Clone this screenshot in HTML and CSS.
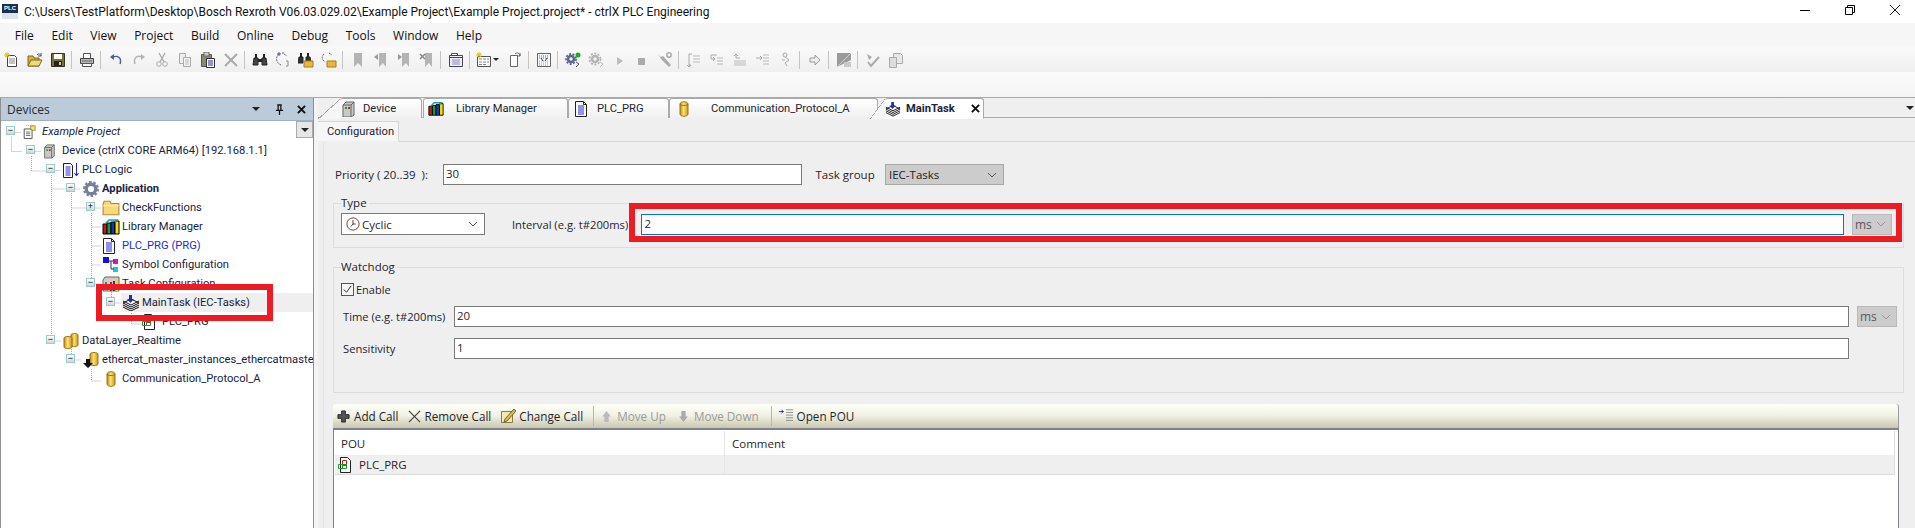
FILE: index.html
```html
<!DOCTYPE html>
<html lang="en">
<head>
<meta charset="utf-8">
<title>ctrlX PLC Engineering</title>
<link rel="stylesheet" href="styles.css">
</head>
<body>
<svg class="defs" width="0" height="0" aria-hidden="true">
  <defs>
    <linearGradient id="gold" x1="0" x2="1" y1="0" y2="0"><stop offset="0" stop-color="#b98a10"/><stop offset=".45" stop-color="#ffe27a"/><stop offset="1" stop-color="#c9961a"/></linearGradient>
    <symbol id="i-proj" viewBox="0 0 16 16"><path d="M5 .5h8v3" fill="none" stroke="#999" stroke-dasharray="1 1"/><rect x="10" y="1" width="5" height="5" fill="#f4e26a" stroke="#a09030"/><path d="M2.500 4.500h7l2 2v9h-9z" fill="#fff" stroke="#444"/><path d="M4.500 8h5M4.500 10h5M4.500 12h5" stroke="#666"/></symbol>
    <symbol id="i-device" viewBox="0 0 16 16"><path d="M3 4l3-3h8v13l-3 2H3z" fill="#c8c8c8" stroke="#666"/><path d="M3 4h8v12M11 4l3-3" fill="none" stroke="#666"/><rect x="5" y="6" width="2" height="2" fill="#1aa51a"/><rect x="8" y="6" width="2" height="2" fill="#d02020"/></symbol>
    <symbol id="i-lib" viewBox="0 0 18 16"><path d="M1 5h4v10H1z" fill="#c81818" stroke="#000"/><path d="M5 4h4v11H5z" fill="#179a3a" stroke="#000"/><path d="M9 3h4v12H9z" fill="#1f2fc0" stroke="#000"/><path d="M13 2h4v13h-4z" fill="#f4e000" stroke="#000"/><path d="M3 5l4-4h8l-2 2" fill="none" stroke="#14a0b0" stroke-width="1.500"/></symbol>
    <symbol id="i-prg" viewBox="0 0 14 16"><path d="M1.500.5h8l3 3v12h-11z" fill="#fff" stroke="#222"/><path d="M9.500.5v3h3" fill="none" stroke="#222"/><path d="M4 5h6M4 7h6M4 9h6M4 11h6M4 13h6" stroke="#2222d8"/></symbol>
    <symbol id="i-logic" viewBox="0 0 18 16"><path d="M1.500 1.500h7l2 2v12h-9z" fill="#fff" stroke="#222"/><path d="M3.500 5h5M3.500 7h5M3.500 9h5M3.500 11h5M3.500 13h5" stroke="#2222d8"/><path d="M14.500 1v12M12.500 11l2 3 2-3" fill="none" stroke="#2222d8"/></symbol>
    <symbol id="i-cyl" viewBox="0 0 10 16"><path d="M1 3c0-3 8-3 8 0v10c0 3-8 3-8 0z" fill="url(#gold)" stroke="#9a7410"/><path d="M1 3c0 2 8 2 8 0" fill="none" stroke="#9a7410"/></symbol>
    <symbol id="i-cyl2" viewBox="0 0 16 16"><path d="M8 2c0-2 7-2 7 0v10c0 2-7 2-7 0z" fill="url(#gold)" stroke="#9a7410"/><path d="M1 5c0-2 8-2 8 0v9c0 2-8 2-8 0z" fill="url(#gold)" stroke="#9a7410"/></symbol>
    <symbol id="i-eth" viewBox="0 0 16 16"><path d="M7 2c0-2 8-2 8 0v10c0 2-8 2-8 0z" fill="url(#gold)" stroke="#9a7410"/><path d="M3 7h4v4h3l-5 5-5-5h3z" fill="#111"/></symbol>
    <symbol id="i-task" viewBox="0 0 18 16"><path d="M9 4l8 4-8 4-8-4z" fill="#fff" stroke="#111"/><path d="M1 10l8 4 8-4M1 12l8 4 8-4" fill="none" stroke="#111"/><path d="M1 6l8 4 8-4" fill="none" stroke="#111"/><path d="M7 0h3v4h2l-3.500 4L5 4h2z" fill="#1e2fb0"/></symbol>
    <symbol id="i-gear" viewBox="0 0 16 16"><circle cx="8" cy="8" r="4.800" fill="none" stroke="#75819a" stroke-width="3.400"/><circle cx="8" cy="8" r="7" fill="none" stroke="#75819a" stroke-width="2" stroke-dasharray="2.500 1.900"/></symbol>
    <symbol id="i-folder" viewBox="0 0 16 14"><path d="M1 3l1-2h5l1 2h7v10H1z" fill="#f8d878" stroke="#a88c40"/><path d="M1 5h14" stroke="#fff3c0"/></symbol>
    <symbol id="i-sym" viewBox="0 0 16 16"><rect x="0" y="0" width="6" height="6" fill="#1010e0"/><rect x="10" y="2" width="5" height="5" fill="#e010d0"/><rect x="10" y="10" width="5" height="5" fill="#10d0e0"/><path d="M6 4h6M8 4v8h3" fill="none" stroke="#333"/></symbol>
    <symbol id="i-cfg" viewBox="0 0 18 16"><path d="M1 4l2-3h14v14H1z" fill="#ccc" stroke="#666"/><path d="M8 6h2v9H8z" fill="#c81818"/><path d="M11 5h2v10h-2z" fill="#1f2fc0"/><path d="M14 4h2v11h-2z" fill="#f4e000"/><rect x="3" y="6" width="2" height="2" fill="#1aa51a"/></symbol>
    <symbol id="i-pou" viewBox="0 0 14 16"><path d="M2.500.5h7l3 3v12h-10z" fill="#fff" stroke="#222"/><path d="M4.500 3.500h4v5h-4z" fill="none" stroke="#c81818"/><path d="M.5 7.500h4v4h-4zM4.500 7.500h4v4h-4z" fill="none" stroke="#1a9a30"/></symbol>
    <symbol id="i-new" viewBox="0 0 16 16"><path d="M3.500 3.500h7l2 2v9h-9z" fill="#fff" stroke="#444"/><path d="M5 7h6M5 9h6M5 11h6" stroke="#888"/><path d="M3 0v6M0 3h6M1 1l4 4M5 1L1 5" stroke="#e8c000"/></symbol>
    <symbol id="i-open" viewBox="0 0 16 16"><path d="M1 4h5l1 2h5v8H1z" fill="#d8b040" stroke="#806820"/><path d="M1 14l3-6h11l-3 6z" fill="#f0d878" stroke="#806820"/><path d="M10 3c2-2 3-1 4 1M14 1v3h-3" fill="none" stroke="#456"/></symbol>
    <symbol id="i-save" viewBox="0 0 16 16"><path d="M1.500 1.500h13v13h-13z" fill="#7a7030" stroke="#332"/><rect x="4" y="2" width="8" height="5" fill="#fff"/><rect x="4" y="9" width="8" height="5" fill="#222"/><rect x="9" y="10" width="2" height="3" fill="#ccc"/></symbol>
    <symbol id="i-print" viewBox="0 0 16 16"><path d="M4.500 1.500h7v5h-7z" fill="#fff" stroke="#555"/><path d="M1.500 6.500h13v5h-13z" fill="#b8b8b8" stroke="#444"/><path d="M3.500 11.500h9v3h-9z" fill="#fff" stroke="#555"/><path d="M3 9h10" stroke="#666"/></symbol>
    <symbol id="i-undo" viewBox="0 0 16 16"><path d="M5 5c5-2 9 1 7 7" fill="none" stroke="#4a5ab0" stroke-width="1.400"/><path d="M2 5l4-3v6z" fill="#4a5ab0"/></symbol>
    <symbol id="i-redo" viewBox="0 0 16 16"><path d="M11 5C6 3 2 6 4 12" fill="none" stroke="#b4b4b4" stroke-width="1.500"/><path d="M14 5l-4-3v6z" fill="#b4b4b4"/></symbol>
    <symbol id="i-cut" viewBox="0 0 16 16"><path d="M5 1l5 9M11 1L6 10" stroke="#aaa" stroke-width="1.300"/><circle cx="5" cy="12" r="2.300" fill="none" stroke="#aaa"/><circle cx="11" cy="12" r="2.300" fill="none" stroke="#aaa"/></symbol>
    <symbol id="i-copy" viewBox="0 0 16 16"><path d="M2.500 1.500h6v10h-6z" fill="#eee" stroke="#aaa"/><path d="M6.500 5.500h7v9h-7z" fill="#f4f4f4" stroke="#aaa"/><path d="M8 8h4M8 10h4M8 12h4" stroke="#bbb"/></symbol>
    <symbol id="i-paste" viewBox="0 0 16 16"><path d="M1.500 2.500h10v12h-10z" fill="#8a8a70" stroke="#555"/><rect x="4" y="0" width="5" height="4" fill="#ccc" stroke="#666"/><path d="M6.500 6.500h8v9h-8z" fill="#fff" stroke="#333"/><path d="M8 9h5M8 11h5M8 13h5" stroke="#2222a8"/></symbol>
    <symbol id="i-del" viewBox="0 0 16 16"><path d="M2 2l12 12M14 2L2 14" stroke="#aaa" stroke-width="2"/></symbol>
    <symbol id="i-find" viewBox="0 0 16 16"><path d="M2 6h4v7H1zM10 6h4l1 7h-5z" fill="#444" stroke="#222"/><path d="M3 2h2v4H3zM11 2h2v4h-2zM6 7h4v3H6z" fill="#222"/></symbol>
    <symbol id="i-next" viewBox="0 0 16 16"><path d="M4 2c-4 3-3 9 2 11M9 2l3 2M7 1h2" fill="none" stroke="#667" stroke-dasharray="2 1"/><path d="M4 0v4M2 2h4" stroke="#557"/><path d="M11 9h2v5h-2" fill="none" stroke="#889"/></symbol>
    <symbol id="i-findf" viewBox="0 0 16 16"><path d="M1 5h4v6H0zM8 5h4l1 6H8z" fill="#333" stroke="#222"/><path d="M2 1h2v4H2zM9 1h2v4H9z" fill="#222"/><path d="M6 9h9v6H6z" fill="#e8b838" stroke="#a08020"/></symbol>
    <symbol id="i-nextf" viewBox="0 0 16 16"><path d="M3 2c-3 3-2 6 1 8M8 1l3 2" fill="none" stroke="#667" stroke-dasharray="2 1"/><path d="M6 9h9v6H6z" fill="#e8b838" stroke="#a08020"/></symbol>
    <symbol id="i-mark" viewBox="0 0 16 16"><path d="M4 1h8v14l-4-4-4 4z" fill="#b4b4b4"/></symbol>
    <symbol id="i-markl" viewBox="0 0 16 16"><path d="M6 1h7v14l-3-4-4 4z" fill="#b4b4b4"/><path d="M1 5l4-3v6z" fill="#999"/></symbol>
    <symbol id="i-markr" viewBox="0 0 16 16"><path d="M6 1h7v14l-3-4-4 4z" fill="#b4b4b4"/><path d="M6 5L2 2v6z" fill="#999"/></symbol>
    <symbol id="i-markx" viewBox="0 0 16 16"><path d="M6 1h7v14l-3-4-4 4z" fill="#b4b4b4"/><path d="M1 2l5 5M6 2L1 7" stroke="#888" stroke-width="1.500"/></symbol>
    <symbol id="i-win" viewBox="0 0 16 16"><path d="M3.500 1.500h6v4h-6z" fill="#fff" stroke="#555"/><path d="M1.500 3.500h13v11h-13z" fill="#eef" stroke="#445"/><path d="M1.500 5.500h13" stroke="#445"/><path d="M4 8h8M4 10h8M4 12h8" stroke="#88a"/></symbol>
    <symbol id="i-grid" viewBox="0 0 16 16"><path d="M1.500 4.500h13v10h-13z" fill="#fff" stroke="#555"/><path d="M3 7h3M7 7h3M11 7h2M3 10h3M7 10h3M11 10h2M3 12.500h3M7 12.500h3" stroke="#8a8a8a"/><path d="M3 0v6M0 3h6M1 1l4 4M5 1L1 5" stroke="#e8c000"/></symbol>
    <symbol id="i-doc" viewBox="0 0 16 16"><path d="M3.500 3.500h7v11h-7z" fill="#fff" stroke="#666"/><path d="M8 2c2-2 5-1 5 2M13 1v3h-3" fill="none" stroke="#666"/></symbol>
    <symbol id="i-bld" viewBox="0 0 16 16"><path d="M1.500 1.500h13v13h-13z" fill="#fff" stroke="#666"/><path d="M3 4h10M3 6h10" stroke="#4858b8" stroke-dasharray="1 1"/><path d="M3 9h10M3 11h10M3 13h10" stroke="#999" stroke-dasharray="1 1"/><path d="M5 6l2 3M11 6L9 9" stroke="#2e3fa0"/></symbol>
    <symbol id="i-login" viewBox="0 0 16 16"><circle cx="6" cy="7" r="3" fill="none" stroke="#5a6890" stroke-width="2.500"/><circle cx="6" cy="7" r="5" fill="none" stroke="#5a6890" stroke-width="1.800" stroke-dasharray="2 1.500"/><circle cx="13" cy="3" r="2.500" fill="#18b018"/><path d="M11 10l3 2-3 3" fill="none" stroke="#555"/></symbol>
    <symbol id="i-logout" viewBox="0 0 16 16"><circle cx="7" cy="7" r="3" fill="none" stroke="#b4b4b4" stroke-width="2.500"/><circle cx="7" cy="7" r="5.500" fill="none" stroke="#b4b4b4" stroke-width="1.800" stroke-dasharray="2 1.500"/><path d="M12 10l3 2-3 3" fill="none" stroke="#bbb"/></symbol>
    <symbol id="i-play" viewBox="0 0 16 16"><path d="M6 5l6 4-6 4z" fill="#bbb"/></symbol>
    <symbol id="i-stop" viewBox="0 0 16 16"><rect x="4" y="6" width="7" height="7" fill="#aaa"/></symbol>
    <symbol id="i-wrench" viewBox="0 0 16 16"><path d="M1 3l3 2 2-1 8 9-2 2-8-8-1-2-2-2z" fill="#aaa"/><circle cx="12" cy="3" r="2.200" fill="none" stroke="#aaa" stroke-width="1.500"/></symbol>
    <symbol id="i-s1" viewBox="0 0 16 16"><path d="M6 2H3v11h2M3 13v2M1 13l2 2 2-2" fill="none" stroke="#aaa"/><path d="M7 4h7M7 7h7M7 10h7" stroke="#bbb"/></symbol>
    <symbol id="i-s2" viewBox="0 0 16 16"><path d="M2 3h6M2 3v4h4M4 9L6 7 4 5" fill="none" stroke="#aaa"/><path d="M8 6h6M8 9h6M8 12h6" stroke="#bbb"/></symbol>
    <symbol id="i-s3" viewBox="0 0 16 16"><path d="M4 6V2M2 4l2-2 2 2M4 6h4" fill="none" stroke="#aaa"/><path d="M2 9h12M2 11h12M2 13h12" stroke="#bbb"/></symbol>
    <symbol id="i-s4" viewBox="0 0 16 16"><path d="M1 6h6M5 4l2 2-2 2" fill="none" stroke="#aaa"/><path d="M8 3h6M8 6h6M8 9h6M8 12h6" stroke="#bbb"/></symbol>
    <symbol id="i-s5" viewBox="0 0 16 16"><circle cx="7" cy="3" r="2" fill="none" stroke="#aaa"/><path d="M7 5l4 3-4 3M7 11l2 3" fill="none" stroke="#aaa"/><path d="M4 8h3" stroke="#aaa"/></symbol>
    <symbol id="i-arr" viewBox="0 0 16 16"><path d="M3 6h5V3l5 5-5 5v-3H3z" fill="#eee" stroke="#999"/></symbol>
    <symbol id="i-flag" viewBox="0 0 16 16"><path d="M1 1h14v7L1 15z" fill="#9a9a9a"/><path d="M1 15L15 1" stroke="#ccc"/><path d="M8 10h7v5H8z" fill="#c8c8c8"/></symbol>
    <symbol id="i-chk" viewBox="0 0 16 16"><path d="M2 2l5 3-3 3z" fill="#aaa"/><path d="M3 10l3 4 8-9" fill="none" stroke="#aaa" stroke-width="2"/></symbol>
    <symbol id="i-dup" viewBox="0 0 16 16"><path d="M5.500 1.500h7l2 2v8h-9z" fill="#e8e8e8" stroke="#aaa"/><path d="M1.500 5.500h7v10h-7z" fill="#ddd" stroke="#aaa"/></symbol>
    <symbol id="i-clock" viewBox="0 0 16 16"><circle cx="8" cy="8" r="7" fill="#fff" stroke="#7a1c1c"/><path d="M8 3.500V8l-2.500 3M8 8h3" fill="none" stroke="#222"/></symbol>
    <symbol id="i-add" viewBox="0 0 14 14"><path d="M5 1h4v4h4v4H9v4H5V9H1V5h4z" fill="#555" stroke="#222"/></symbol>
    <symbol id="i-rem" viewBox="0 0 14 14"><path d="M1 1l12 12M13 1L1 13" stroke="#444" stroke-width="1.300"/></symbol>
    <symbol id="i-chg" viewBox="0 0 16 16"><path d="M1.500 3.500h11v11h-11z" fill="#f4e8b8" stroke="#8a7a40"/><path d="M5 11l9-10 2 2-9 10-3 1z" fill="#e8b838" stroke="#665"/></symbol>
    <symbol id="i-up" viewBox="0 0 12 12"><path d="M6 1l4 5H8v5H4V6H2z" fill="#bbb"/></symbol>
    <symbol id="i-down" viewBox="0 0 12 12"><path d="M6 11l4-5H8V1H4v5H2z" fill="#aaa"/></symbol>
    <symbol id="i-openpou" viewBox="0 0 18 16"><path d="M9 1h8M9 4h8M9 7h8M9 10h8M9 13h8" stroke="#888"/><path d="M1 3h5M4 1l2 2-2 2" fill="none" stroke="#2222a8"/></symbol>
  </defs>
</svg>

<header class="titlebar">
  <div class="app-logo">PLC</div>
  <div class="title-text">C:\Users\TestPlatform\Desktop\Bosch Rexroth V06.03.029.02\Example Project\Example Project.project* - ctrlX PLC Engineering</div>
  <div class="winbtns">
    <svg class="winbtn" viewBox="0 0 10 10"><path d="M0 5.500h10" stroke="#000"/></svg>
    <svg class="winbtn" viewBox="0 0 10 10"><path d="M.5 2.500h7v7h-7zM2.500 2.500v-2h7v7h-2" fill="none" stroke="#000"/></svg>
    <svg class="winbtn" viewBox="0 0 10 10"><path d="M0 0l10 10M10 0L0 10" stroke="#000" stroke-width=".9"/></svg>
  </div>
</header>

<nav class="menubar">
  <span class="menu">File</span><span class="menu">Edit</span><span class="menu">View</span><span class="menu">Project</span><span class="menu">Build</span><span class="menu">Online</span><span class="menu">Debug</span><span class="menu">Tools</span><span class="menu">Window</span><span class="menu">Help</span>
</nav>

<div class="toolbar">
  <span class="tb"><svg><use href="#i-new"/></svg></span><span class="tb"><svg><use href="#i-open"/></svg></span><span class="tb"><svg><use href="#i-save"/></svg></span><i class="sep"></i>
  <span class="tb"><svg><use href="#i-print"/></svg></span><i class="sep"></i>
  <span class="tb"><svg><use href="#i-undo"/></svg></span><span class="tb"><svg><use href="#i-redo"/></svg></span><span class="tb"><svg><use href="#i-cut"/></svg></span><span class="tb"><svg><use href="#i-copy"/></svg></span><span class="tb"><svg><use href="#i-paste"/></svg></span><span class="tb"><svg><use href="#i-del"/></svg></span><i class="sep"></i>
  <span class="tb"><svg><use href="#i-find"/></svg></span><span class="tb"><svg><use href="#i-next"/></svg></span><span class="tb"><svg><use href="#i-findf"/></svg></span><span class="tb"><svg><use href="#i-nextf"/></svg></span><i class="sep"></i>
  <span class="tb"><svg><use href="#i-mark"/></svg></span><span class="tb"><svg><use href="#i-markl"/></svg></span><span class="tb"><svg><use href="#i-markr"/></svg></span><span class="tb"><svg><use href="#i-markx"/></svg></span><i class="sep"></i>
  <span class="tb"><svg><use href="#i-win"/></svg></span><i class="sep"></i>
  <span class="tb tb-drop"><svg><use href="#i-grid"/></svg><b class="caret"></b></span><span class="tb"><svg><use href="#i-doc"/></svg></span><i class="sep"></i>
  <span class="tb"><svg><use href="#i-bld"/></svg></span><i class="sep"></i>
  <span class="tb"><svg><use href="#i-login"/></svg></span><span class="tb"><svg><use href="#i-logout"/></svg></span><span class="tb"><svg><use href="#i-play"/></svg></span><span class="tb"><svg><use href="#i-stop"/></svg></span><span class="tb"><svg><use href="#i-wrench"/></svg></span><i class="sep"></i>
  <span class="tb"><svg><use href="#i-s1"/></svg></span><span class="tb"><svg><use href="#i-s2"/></svg></span><span class="tb"><svg><use href="#i-s3"/></svg></span><span class="tb"><svg><use href="#i-s4"/></svg></span><span class="tb"><svg><use href="#i-s5"/></svg></span><i class="sep"></i>
  <span class="tb"><svg><use href="#i-arr"/></svg></span><i class="sep"></i>
  <span class="tb"><svg><use href="#i-flag"/></svg></span><i class="sep"></i>
  <span class="tb"><svg><use href="#i-chk"/></svg></span><span class="tb"><svg><use href="#i-dup"/></svg></span>
</div>
<div class="toolbar-empty"></div>

<main class="workspace">
  <aside class="devices">
    <div class="panel-head">
      <span class="panel-title">Devices</span>
      <b class="caret caret-lg"></b>
      <svg class="pin" viewBox="0 0 10 12"><path d="M2.500 1h5M3.500 1v6M6.500 1v6M1 7h8M5 7v5" fill="none" stroke="#111" stroke-width="1.400"/></svg>
      <svg class="pin" viewBox="0 0 10 10"><path d="M1 1l8 8M9 1L1 9" stroke="#111" stroke-width="2.200"/></svg>
    </div>
    <div class="tree">
      <svg class="guides" width="300" height="300" viewBox="0 0 300 300">
        <path d="M15.500 11.500h6M11.500 15.500v15h10M35.500 30.500h6M31.500 35v15h16M55.500 49.500h6M51.500 54v166M51.500 68h20M74.500 68h6M71.500 72v88M71.500 87h20M95.500 87h6M91.500 92v69M91.500 106h10M91.500 125h10M91.500 144h10M95.500 163h6M111.500 167v13M115.500 182h6M131.500 190v13h10M55.500 220h6M71.500 226v8M75.500 239h6M91.500 248v12h10" fill="none" stroke="#a9a9a9" stroke-dasharray="1 1"/>
      </svg>
      <button class="tree-drop" type="button"><b class="caret caret-lg"></b></button>
      <div class="row l0"><span class="exp">−</span><svg class="ic ic-14"><use href="#i-proj"/></svg><em class="label">Example Project</em></div>
      <div class="row l1"><span class="exp">−</span><svg class="ic ic-14"><use href="#i-device"/></svg><span class="label">Device (ctrlX CORE ARM64) [192.168.1.1]</span></div>
      <div class="row l2"><span class="exp">−</span><svg class="ic"><use href="#i-logic"/></svg><span class="label">PLC Logic</span></div>
      <div class="row l3"><span class="exp">−</span><svg class="ic"><use href="#i-gear"/></svg><strong class="label">Application</strong></div>
      <div class="row l4"><span class="exp">+</span><svg class="ic"><use href="#i-folder"/></svg><span class="label">CheckFunctions</span></div>
      <div class="row l4"><span class="exp none"></span><svg class="ic"><use href="#i-lib"/></svg><span class="label">Library Manager</span></div>
      <div class="row l4"><span class="exp none"></span><svg class="ic ic-14"><use href="#i-prg"/></svg><span class="label link">PLC_PRG (PRG)</span></div>
      <div class="row l4"><span class="exp none"></span><svg class="ic"><use href="#i-sym"/></svg><span class="label">Symbol Configuration</span></div>
      <div class="row l4"><span class="exp">−</span><svg class="ic"><use href="#i-cfg"/></svg><span class="label">Task Configuration</span></div>
      <div class="row l5 selected"><span class="exp">−</span><svg class="ic"><use href="#i-task"/></svg><span class="label">MainTask (IEC-Tasks)</span></div>
      <div class="row l6"><span class="exp none"></span><svg class="ic ic-14"><use href="#i-pou"/></svg><span class="label">PLC_PRG</span></div>
      <div class="row l2"><span class="exp">−</span><svg class="ic"><use href="#i-cyl2"/></svg><span class="label">DataLayer_Realtime</span></div>
      <div class="row l3"><span class="exp">−</span><svg class="ic"><use href="#i-eth"/></svg><span class="label">ethercat_master_instances_ethercatmaster</span></div>
      <div class="row l4"><span class="exp none"></span><svg class="ic ic-cyl"><use href="#i-cyl"/></svg><span class="label">Communication_Protocol_A</span></div>
    </div>
  </aside>

  <section class="editor">
    <div class="tabstrip">
      <div class="tab tab-device"><svg class="tab-ic"><use href="#i-device"/></svg><span>Device</span></div>
      <div class="tab tab-lib"><svg class="tab-ic"><use href="#i-lib"/></svg><span>Library Manager</span></div>
      <div class="tab tab-prg"><svg class="tab-ic"><use href="#i-prg"/></svg><span>PLC_PRG</span></div>
      <div class="tab tab-comm"><svg class="tab-ic tab-ic-cyl"><use href="#i-cyl"/></svg><span>Communication_Protocol_A</span></div>
      <div class="tab tab-main"><svg class="tab-ic"><use href="#i-task"/></svg><strong>MainTask</strong><svg class="tab-x" viewBox="0 0 10 10"><path d="M1 1l8 8M9 1L1 9" stroke="#111" stroke-width="2.200"/></svg></div>
      <b class="caret caret-lg strip-caret"></b>
    </div>
    <div class="subtabs"><div class="subtab">Configuration</div></div>
    <div class="content">
      <div class="form-row priority-row">
        <label class="lbl-priority">Priority ( 20..39&nbsp; ):</label>
        <div class="input input-priority">30</div>
        <label class="lbl-group">Task group</label>
        <div class="select select-off select-group"><span>IEC-Tasks</span><svg class="chev" viewBox="0 0 10 6"><path d="M1 1l4 4 4-4" fill="none" stroke="#555"/></svg></div>
      </div>

      <fieldset class="group group-type">
        <legend>Type</legend>
        <div class="form-row">
          <div class="select select-type"><svg class="clock"><use href="#i-clock"/></svg><span>Cyclic</span><svg class="chev" viewBox="0 0 10 6"><path d="M1 1l4 4 4-4" fill="none" stroke="#555"/></svg></div>
          <label class="lbl-interval">Interval (e.g. t#200ms)</label>
          <div class="input input-focus">2</div>
          <div class="select select-off select-ms"><span>ms</span><svg class="chev" viewBox="0 0 10 6"><path d="M1 1l4 4 4-4" fill="none" stroke="#999"/></svg></div>
        </div>
      </fieldset>

      <fieldset class="group group-watch">
        <legend>Watchdog</legend>
        <div class="enable"><span class="check"><svg viewBox="0 0 12 12"><path d="M2 6l3 3 5-7" fill="none" stroke="#222"/></svg></span><span>Enable</span></div>
        <div class="form-row watch-row">
          <label class="lbl-watch">Time (e.g. t#200ms)</label>
          <div class="input input-grow">20</div>
          <div class="select select-off select-ms"><span>ms</span><svg class="chev" viewBox="0 0 10 6"><path d="M1 1l4 4 4-4" fill="none" stroke="#999"/></svg></div>
        </div>
        <div class="form-row watch-row sens-row">
          <label class="lbl-watch">Sensitivity</label>
          <div class="input input-grow input-sens">1</div>
        </div>
      </fieldset>

      <div class="call-bar">
        <span class="call"><svg class="call-ic"><use href="#i-add"/></svg>Add Call</span>
        <span class="call"><svg class="call-ic"><use href="#i-rem"/></svg>Remove Call</span>
        <span class="call"><svg class="call-ic call-ic-lg"><use href="#i-chg"/></svg>Change Call</span>
        <i class="call-sep"></i>
        <span class="call off"><svg class="call-ic"><use href="#i-up"/></svg>Move Up</span>
        <span class="call off"><svg class="call-ic"><use href="#i-down"/></svg>Move Down</span>
        <i class="call-sep"></i>
        <span class="call"><svg class="call-ic call-ic-lg"><use href="#i-openpou"/></svg>Open POU</span>
      </div>
      <div class="calls">
        <div class="calls-head"><div class="col-pou">POU</div><div class="col-comment">Comment</div></div>
        <div class="calls-row"><div class="col-pou"><svg class="pou-ic"><use href="#i-pou"/></svg>PLC_PRG</div><div class="col-comment"></div></div>
      </div>
    </div>
  </section>
</main>

<div class="mark mark-tree"></div>
<div class="mark mark-interval"></div>
</body>
</html>
```

FILE: styles.css
```css
* { box-sizing: border-box; }
html, body { margin: 0; padding: 0; }
body {
  width: 1915px; height: 528px; overflow: hidden; position: relative;
  font-family: "Open Sans", "Noto Sans", sans-serif; font-size: 11.5px; color: #1f2530;
  background: #f6f6f6; display: flex; flex-direction: column;
}
.defs { position: absolute; }
svg { display: block; }

.titlebar { height: 23px; background: #fff; display: flex; align-items: center; padding-left: 2px; flex: none; }
.app-logo { width: 16px; height: 15px; background: linear-gradient(#1c2f52 62%, #dfe4ea 62%); color: #fff; font: bold 6px/9px "Liberation Sans", sans-serif; text-align: center; }
.title-text { margin-left: 6px; font-family: Roboto, sans-serif; font-size: 12px; color: #111; white-space: nowrap; }
.winbtns { margin-left: auto; display: flex; gap: 35px; padding-right: 15px; padding-bottom: 3px; }
.winbtn { width: 10px; height: 10px; }

.menubar { height: 24px; background: #f6f6f6; display: flex; align-items: center; padding-left: 6px; flex: none; font-size: 12px; color: #111; }
.menu { padding: 0 8.800px; }

.toolbar { height: 25px; background: linear-gradient(#fafafa, #efefef); display: flex; align-items: center; flex: none; }
.tb { width: 23px; height: 20px; display: flex; align-items: center; justify-content: center; position: relative; }
.tb svg { width: 16px; height: 16px; }
.tb-drop { width: 30px; justify-content: flex-start; padding-left: 3px; }
.sep { width: 6px; height: 18px; display: block; position: relative; }
.sep::before { content: ""; position: absolute; left: 2px; top: 0; width: 1px; height: 18px; background: #c4c4c4; }
.toolbar-empty { height: 25px; background: linear-gradient(#fbfbfb, #f4f4f4); flex: none; }

.caret { display: block; width: 0; height: 0; border-left: 3px solid transparent; border-right: 3px solid transparent; border-top: 3px solid #222; }
.tb-drop .caret { margin-left: 1px; }
.caret-lg { border-left-width: 4px; border-right-width: 4px; border-top-width: 4px; }

.workspace { flex: 1; min-height: 0; display: flex; gap: 4px; border-top: 1px solid #aaa; background: #f4f4f4; }

.devices { width: 314px; flex: none; background: #fff; border-left: 1px solid #8f8f8f; border-right: 1px solid #8f8f8f; display: flex; flex-direction: column; overflow: hidden; }
.panel-head { height: 23px; background: #bccbd9; display: flex; align-items: center; padding: 0 5px; flex: none; border-bottom: 1px solid #9fb0c0; }
.panel-title { font-size: 12px; color: #1f2b3a; margin-right: auto; margin-left: 1px; }
.panel-head .caret { margin-right: 15px; }
.pin { width: 9px; height: 11px; margin-right: 13px; }
.pin:last-child { margin-right: 2px; }
.tree { position: relative; flex: 1; padding-top: 1px; }
.guides { position: absolute; left: -1px; top: 0; }
.tree-drop { position: absolute; right: 0; top: 0; width: 17px; height: 17px; padding: 0; background: #e6e6e6; border: 1px solid #aaa; display: flex; align-items: center; justify-content: center; }
.row { height: 19px; display: flex; align-items: center; position: relative; white-space: nowrap; font-family: Roboto, sans-serif; font-size: 11.200px; color: #17243f; }
.l0 { padding-left: 5px; } .l1 { padding-left: 25px; } .l2 { padding-left: 45px; } .l3 { padding-left: 65px; }
.l4 { padding-left: 85px; } .l5 { padding-left: 105px; } .l6 { padding-left: 125px; }
.exp { width: 9px; height: 9px; margin-right: 7px; margin-top: -3px; border: 1px solid #9cc; background: linear-gradient(#fff, #d4d4d4); font: 9px/7px "Liberation Sans", sans-serif; text-align: center; color: #000; overflow: hidden; flex: none; }
.exp.none { visibility: hidden; }
.ic { width: 18px; height: 16px; margin-right: 2px; flex: none; }
.ic-14 { width: 14px; margin-right: 6px; }
.ic-cyl { width: 10px; margin-left: 4px; margin-right: 6px; }
.label { font-style: normal; font-weight: 400; }
em.label { font-style: italic; }
strong.label { font-weight: 700; }
.link { color: #1c2fd0; }
.selected::before { content: ""; position: absolute; left: 120px; right: 0; top: 0; bottom: 0; background: #efefef; }
.selected > * { position: relative; }

.editor { flex: 1; min-width: 0; display: flex; flex-direction: column; background: #efefef; }
.tabstrip { height: 20px; border-bottom: 1px solid #aaa; display: flex; position: relative; flex: none; }
.tab { height: 20px; margin-bottom: -1px; display: flex; align-items: center; background: linear-gradient(#fff, #f0f0f0); border: 1px solid #aaa; border-left: 1px solid #aaa; border-bottom: none; border-radius: 3px 3px 0 0; position: relative; font-family: Roboto, sans-serif; font-size: 11.200px; color: #1f2530; white-space: nowrap; flex: none; }
.tab-device { width: 82px; margin-left: 22px; padding-left: 0; border-left: none; }
.tab-device::before, .tab-main::before { content: ""; position: absolute; left: -22px; top: 0; width: 22px; height: 20px; background: linear-gradient(to bottom right, transparent 49%, #aaa 49%, #aaa 52%, #f6f6f6 52%); }
.tab-lib { width: 145px; margin-left: 1px; }
.tab-prg { width: 101px; }
.tab-comm { width: 209px; }
.tab-main { width: 99px; margin-left: 7px; background: #fff; border-bottom: 1px solid #fff; height: 21px; border-left: none; padding-right: 3px; }
.tab-main::before { left: -15px; width: 15px; height: 20px; }
.tab-ic { width: 16px; height: 16px; flex: none; }
.tab-ic-cyl { width: 10px; }
.tab-device .tab-ic { margin-right: 7px; margin-left: 0; }
.tab-lib .tab-ic { margin-left: 4px; margin-right: 12px; }
.tab-prg .tab-ic { margin-left: 5px; margin-right: 9px; width: 14px; }
.tab-comm .tab-ic { margin-left: 9px; margin-right: 22px; }
.tab-main .tab-ic { margin-left: 0; margin-right: 5px; }
.tab-x { width: 9px; height: 9px; margin-left: auto; }
.strip-caret { position: absolute; right: 1px; top: 8px; }

.subtabs { height: 24px; flex: none; padding-top: 3px; border-bottom: 1px solid #d5d5d5; display: flex; }
.subtab { width: 81px; height: 21px; background: #f6f6f6; border: 1px solid #d5d5d5; border-bottom: 1px solid #efefef; border-left: none; padding-left: 9px; line-height: 19px; font-family: Roboto, sans-serif; font-size: 11.200px; color: #1f2530; margin-bottom: -1px; }

.content { flex: 1; min-height: 0; padding: 22px 11px 0 9px; border-left: 1px solid #e4e4e4; margin-left: 5px; }
.form-row { display: flex; align-items: center; height: 21px; }
.priority-row { padding-left: 2px; }
.lbl-priority { width: 108px; }
.input { height: 21px; background: #fff; border: 1px solid #7a7a7a; padding-left: 2px; line-height: 18px; font-size: 11.500px; color: #1f2530; flex: none; }
.input-priority { width: 359px; }
.lbl-group { width: 69.500px; margin-left: 13.500px; }
.select { height: 21px; display: flex; align-items: center; border: 1px solid #7a7a7a; background: #fff; padding-left: 3px; padding-right: 6px; justify-content: space-between; flex: none; }
.select-off { background: #cccccc; border-color: #b8b8b8; color: #5a5a5a; }
.select-group { width: 119px; border-color: #a8a8a8; color: #222; }
.chev { width: 10px; height: 6px; flex: none; }

.group { margin: 10px 0 0; padding: 0 11px 12px 7px; border: 1px solid #dcdcdc; min-width: 0; }
.group legend { padding: 0 2px 0 0; margin-left: 0; height: 16px; line-height: 16px; font-size: 11.500px; background: #efefef; }
.group-type .form-row { height: 22px; margin-top: 2px; }
.select-type { width: 144px; height: 22px; justify-content: flex-start; gap: 2px; padding-left: 4px; }
.select-type .chev { margin-left: auto; }
.clock { width: 14px; height: 14px; }
.lbl-interval { width: 128.500px; margin-left: 27px; font-size: 11.200px; white-space: nowrap; }
.input-focus { flex: 1; border-color: #0078d7; padding-left: 3px; }
.select-ms { width: 40px; margin-left: 8px; font-size: 12px; padding-left: 2px; padding-right: 5px; }
.group-watch { margin-top: 11px; padding: 0 6px 33px 7px; }
.enable { display: flex; align-items: center; gap: 2px; height: 14px; margin-top: 7px; font-size: 11px; }
.check { width: 13px; height: 13px; border: 1px solid #555; background: #f6f6f6; display: block; }
.watch-row { margin-top: 10px; }
.sens-row { margin-top: 11px; }
.lbl-watch { width: 111px; margin-left: 2px; flex: none; font-size: 11.200px; }
.input-grow { flex: 1; }
.input-sens { margin-right: 48px; }

.call-bar { margin-top: 11px; margin-right: 5px; height: 24px; background: linear-gradient(#fcfdf5 10%, #f0f0e4 50%, #c8c7ae); display: flex; align-items: center; padding-left: 4px; font-size: 11.700px; border-radius: 3px 3px 0 0; border-right: 1px solid #9a9aa5; }
.call { display: flex; align-items: center; white-space: nowrap; color: #1f2530; margin-right: 9px; }
.call.off { color: #9a9a9a; margin-right: 11px; }
.call-ic { width: 13px; height: 13px; margin-right: 4px; flex: none; }
.call-ic-lg { width: 16px; height: 16px; margin-right: 3px; }
.call-sep { width: 1px; height: 20px; background: #b5b5b5; margin: 0 6px 0 1px; }

.calls { height: 120px; margin-right: 5px; background: #fff; border: 1px solid #80808f; border-top: 2px solid #80808f; border-bottom: none; padding: 1px 3px 0 1px; }
.calls-head { display: flex; height: 24px; align-items: center; background: #fff; font-size: 11.500px; }
.calls-row { display: flex; height: 20px; align-items: center; background: #efefef; border-bottom: 1px solid #dcdcdc; }
.col-pou { width: 390px; padding-left: 6px; display: flex; align-items: center; height: 100%; border-right: 1px solid #e5e5e5; flex: none; }
.col-comment { flex: 1; height: 100%; padding-left: 7px; display: flex; align-items: center; border-right: 1px solid #dcdcdc; }
.pou-ic { width: 14px; height: 16px; margin-right: 7px; margin-left: -3px; }

.mark { position: absolute; border: 6px solid #ed1c24; pointer-events: none; }
.mark-tree { left: 96px; top: 284px; width: 177px; height: 37px; }
.mark-interval { left: 629px; top: 203px; width: 1273px; height: 39px; }
```
